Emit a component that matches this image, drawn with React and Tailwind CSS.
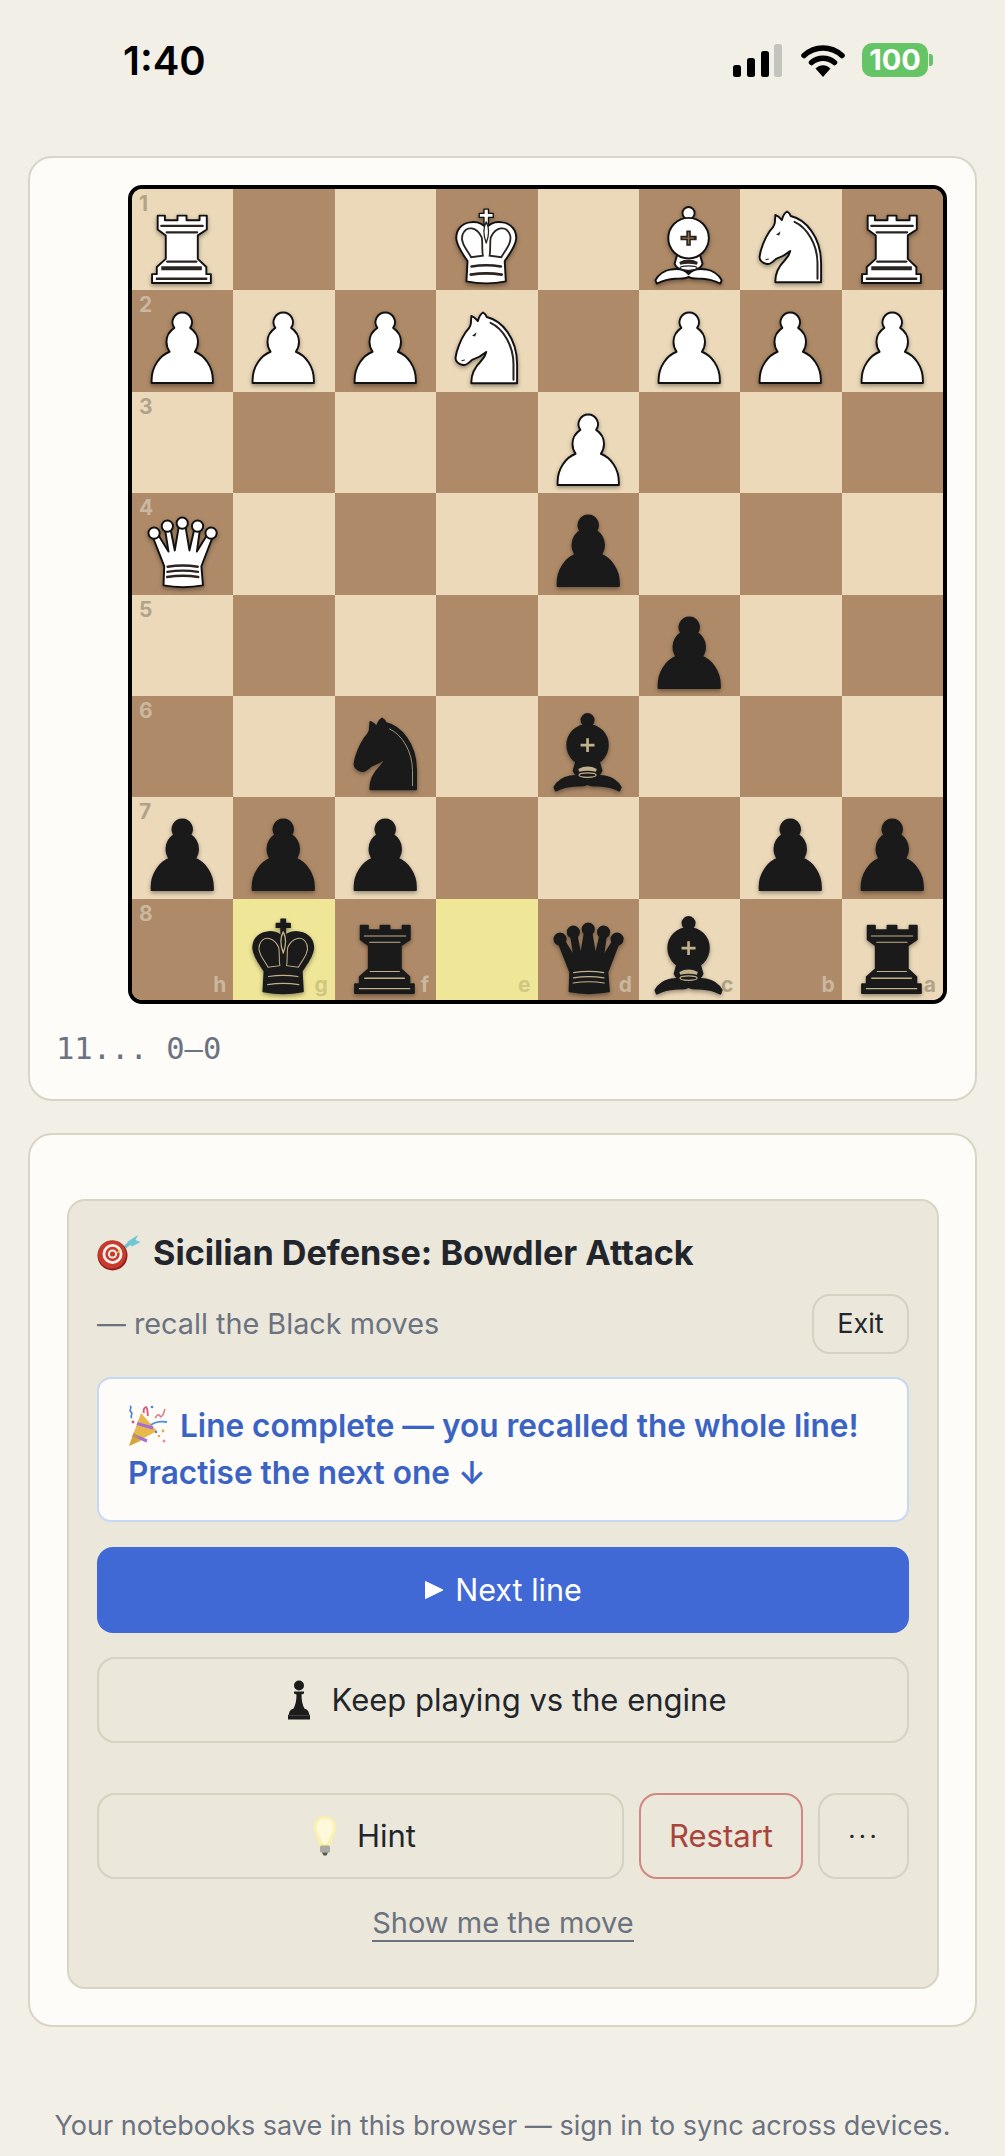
const PAWN = 'M22.3 10a4.3 4.3 0 0 0-3.5 6.8C16.7 18.2 15.3 20.5 15.3 23c0 1.6.5 3.2 1.4 4.4C12.4 29 8.7 34 8.7 40v1.3h27.2V40c0-6-3.7-11-8-12.6.9-1.2 1.4-2.8 1.4-4.4 0-2.5-1.4-4.8-3.5-6.2a4.3 4.3 0 0 0-3.5-6.8z';

function Piece({ type, black }) {
  const fill = black ? '#1a1a1a' : '#fff';
  const line = black ? '#1a1a1a' : '#111';
  const detail = black ? '#c2b08c' : '#2a2320';
  const base = { fill, stroke: line, strokeWidth: 0.85, strokeLinejoin: 'round' };
  const thin = black ? 0.45 : 1;
  const inner = { fill: 'none', stroke: detail, strokeWidth: thin, strokeLinecap: 'round' };

  let shape = null;
  if (type === 'p') {
    shape = <path d={PAWN} {...base} />;
  }
  if (type === 'r') {
    shape = (
      <>
        <path d="M11.4 11.8H14.6V13.9H20.2V11.8H24.2V13.9H30V11.8H33.2V18L29.2 20.6V31L33 34.6V37.8H35V41.7H8.9V37.8H11V34.6L15 31V20.6L11.4 18Z" {...base} />
        <path d="M13 16.4H31.4M15.4 19.2H28.9M15.6 32.2H28.6" {...inner} />
        <path d="M13 35.2H31" {...inner} strokeWidth={black ? 0.7 : 1.8} strokeLinecap="butt" />
        <path d="M10.6 39.8H33.4" {...inner} strokeWidth={black ? 0.6 : 1.1} strokeLinecap="butt" />
      </>
    );
  }
  if (type === 'k') {
    shape = (
      <>
        <path d="M21.3 8.9h2v1.9h2.1v1.8h-2.1v3h-2v-3h-2.1v-1.8h2.1z" {...base} strokeWidth={0.6} />
        <path d="M22.3 17.5C20.5 15 17.5 14.4 15 14.8 11 15.3 8.9 18.5 9 22 9.2 25.5 12 29 14 32L13.5 41Q22.3 42.8 31 41L30.5 32C32.5 29 35.4 25.5 35.6 22 35.7 18.5 33.5 15.3 29.6 14.8 27 14.4 24 15 22.3 17.5Z" {...base} />
        <path d="M22.3 14.6C21 17 20.8 20 22.3 24 23.8 20 23.6 17 22.3 14.6Z" {...base} stroke={detail} strokeWidth={0.6} />
        <path d="M20.3 21.5C18.3 17 13.5 15.8 11.8 20.2 10.6 23.5 13.6 26.8 15.6 30.3L20.8 29.6C20.3 27 20.8 24 20.3 21.5Z" {...inner} strokeWidth={black ? 0.45 : 0.8} />
        <path d="M24.3 21.5C26.3 17 31.1 15.8 32.8 20.2 34 23.5 31 26.8 29 30.3L23.8 29.6C24.3 27 23.8 24 24.3 21.5Z" {...inner} strokeWidth={black ? 0.45 : 0.8} />
        <path d="M15.8 34.4Q22.3 33.3 28.8 34.4M15.4 38Q22.3 36.9 29.2 38" {...inner} strokeWidth={black ? 0.55 : 1.2} />
      </>
    );
  }
  if (type === 'q') {
    shape = (
      <>
        <path d="M8.8 18.5 14.3 32.5 14 41Q22.5 42.6 31.5 41L30.8 32.5 36.2 18.5 34 17.5 28.8 26 30.3 15 28 14.5 25.5 25.5 23.5 13.5 21 13.5 19 25.5 16.8 14.5 14.5 15 16.2 26 11 17.5Z" {...base} />
        <circle cx="9.8" cy="17.8" r="2.5" {...base} />
        <circle cx="15.7" cy="14.7" r="2.5" {...base} />
        <circle cx="22.3" cy="13.4" r="2.5" {...base} />
        <circle cx="29.1" cy="14.7" r="2.5" {...base} />
        <circle cx="35.1" cy="17.8" r="2.5" {...base} />
        <path d="M15.8 32.7Q22.5 31.6 29.2 32.7M15.7 35Q22.5 33.9 29.3 35M15.6 37.3Q22.5 36.2 29.4 37.3" {...inner} strokeWidth={black ? 0.5 : 1.1} />
      </>
    );
  }
  if (type === 'b') {
    shape = (
      <>
        <path d="M17 29 15.8 33.2C16.5 35.5 19 36.3 22 36.5 25 36.3 27.5 35.5 28.2 33.2L27 29Z" {...base} />
        <path d="M22 37.8C20.5 35.8 17.5 35.2 14.2 35.7 11.5 36.2 8.8 37.8 7.3 40.5L7.9 42C10.5 40.7 13 39.9 16 39.8 18.5 39.7 20.5 40 22 39 23.5 40 25.5 39.7 28 39.8 31 39.9 33.5 40.7 36.1 42L36.7 40.5C35.2 37.8 32.5 36.2 29.8 35.7 26.5 35.2 23.5 35.8 22 37.8Z" {...base} />
        <circle cx="22" cy="10.7" r="2.7" {...base} />
        <circle cx="22" cy="21.8" r="9" {...base} />
        {!black && <path d="M22 18.4v6.8M18.4 21.8h7.2" fill="none" stroke="#2a2320" strokeWidth={2} />}
        {!black && <path d="M22 19.2v5.2M19.2 21.8h5.2" fill="none" stroke="#8a6f52" strokeWidth={0.6} />}
        {black && <path d="M22 18.7v6.2M18.9 21.8h6.2" fill="none" stroke={detail} strokeWidth={1.2} />}
        <path d="M17.9 32.4Q22 30.2 26.1 32.4L25.7 33.6Q22 32.8 18.3 33.6Z" fill={detail} stroke="none" />
        <ellipse cx="22" cy="35.1" rx="3.8" ry="1" {...inner} strokeWidth={0.5} />
      </>
    );
  }
  if (type === 'n') {
    shape = (
      <>
        <path d="M15.7 11.5C17 12 18 13 18.6 13.8 19 12 20 10.5 20.9 10 21.8 10.5 22.3 11.2 22.5 12 29 13.5 36 21 36 33V41.4H15.7C15.5 37 17.5 34 20 31.5 21 30.5 22 29 22.3 27.5 20 29.5 17.5 30.5 16 31 15 32 13.5 33.5 12 33.3 10 33 8.5 31.5 8.7 30 9 27 11 22 13 19 14 17.5 15.5 16.5 15.5 14.5Z" {...base} />
        <path d="M24.2 14.6C30 17.2 34.4 25 34.4 33V39.8" {...inner} strokeWidth={black ? 0.35 : 0.9} />
        {!black && <path d="M16 20.3 18 18.8 17.4 20.6Z" fill="#222" />}
        {!black && <path d="M11.5 31.4 12.6 31.1" {...inner} strokeWidth={0.5} />}
      </>
    );
  }

  return (
    <svg viewBox="0 0 45 45" className="absolute inset-0 h-full w-full drop-shadow-[0_2px_2px_rgba(0,0,0,0.38)]">
      {shape}
    </svg>
  );
}

// ranks run 1 to 8 from the top, files h to a: board is seen from Black's side
const BOARD = [
  ['R', '', '', 'K', '', 'B', 'N', 'R'],
  ['P', 'P', 'P', 'N', '', 'P', 'P', 'P'],
  ['', '', '', '', 'P', '', '', ''],
  ['Q', '', '', '', 'p', '', '', ''],
  ['', '', '', '', '', 'p', '', ''],
  ['', '', 'n', '', 'b', '', '', ''],
  ['p', 'p', 'p', '', '', '', 'p', 'p'],
  ['', 'k', 'r', '', 'q', 'b', '', 'r'],
];
const FILES = ['h', 'g', 'f', 'e', 'd', 'c', 'b', 'a'];

function Board() {
  return (
    <div className="mr-[2px] w-[819px] overflow-hidden rounded-[14px] border-4 border-black">
      <div className="grid grid-cols-8">
        {BOARD.map((row, r) =>
          row.map((cell, c) => {
            const light = (r + c) % 2 === 0;
            const lit = r === 7 && (c === 1 || c === 3);
            return (
              <div
                key={`${r}-${c}`}
                className={`relative h-[101.4px] ${lit ? 'bg-[#efe697]' : light ? 'bg-[#ecd9b9]' : 'bg-[#ae8a68]'}`}
              >
                {c === 0 && (
                  <span className={`absolute left-[7px] top-[2px] text-[21px] leading-[26px] font-bold ${light ? 'text-[#b0a38a]' : 'text-[#cbb7a0]'}`}>
                    {r + 1}
                  </span>
                )}
                {r === 7 && (
                  <span className={`absolute bottom-[2px] right-[7px] text-[21px] leading-[26px] font-bold ${lit ? 'text-[#cfc683]' : light ? 'text-[#b0a38a]' : 'text-[#cbb7a0]'}`}>
                    {FILES[c]}
                  </span>
                )}
                {cell && <Piece type={cell.toLowerCase()} black={cell === cell.toLowerCase()} />}
              </div>
            );
          })
        )}
      </div>
    </div>
  );
}

function StatusBar() {
  return (
    <div className="flex h-[156px] items-start justify-between pl-[123px] pr-[72px] pt-[37px]">
      <span className="text-[40px] leading-[48px] font-semibold text-black">1:40</span>
      <div className="mt-[6px] flex items-center">
        <svg width="50" height="33" viewBox="0 0 50 33">
          <rect x="0" y="21" width="8" height="12" rx="2.5" fill="#000" />
          <rect x="14" y="14" width="8" height="19" rx="2.5" fill="#000" />
          <rect x="28" y="7" width="8" height="26" rx="2.5" fill="#000" />
          <rect x="41" y="0" width="8" height="33" rx="2.5" fill="#c4c4be" />
        </svg>
        <svg width="44" height="33" viewBox="0 0 44 33" className="ml-[18px]">
          <path d="M3 11.5C14 1.5 30 1.5 41 11.5" fill="none" stroke="#000" strokeWidth="5.5" strokeLinecap="round" />
          <path d="M10.5 18.5C17 12.8 27 12.8 33.5 18.5" fill="none" stroke="#000" strokeWidth="5.5" strokeLinecap="round" />
          <path d="M14.5 24.5C19 20 25 20 29.5 24.5L22 33Z" fill="#000" />
        </svg>
        <div className="ml-[17px] flex h-[34px] w-[66px] items-center justify-center rounded-[10px] bg-[#65c466] text-[29px] font-bold text-white">
          100
        </div>
        <div className="ml-[1px] h-[12px] w-[4px] rounded-r-[3px] bg-[#65c466]" />
      </div>
    </div>
  );
}

function TargetEmoji() {
  return (
    <svg width="44" height="36" viewBox="0 0 44 36" className="shrink-0">
      <path d="M22 17 33 8" stroke="#6ec0cf" strokeWidth="3.4" />
      <path d="M30 7 41 0 38.5 5 43.5 7 35 11.5Z" fill="#6fc7d6" />
      <ellipse cx="15.5" cy="20.5" rx="15" ry="15" fill="#8f1f18" />
      <ellipse cx="15" cy="19.5" rx="14" ry="14" fill="#c93a2e" />
      <circle cx="15.5" cy="19" r="10" fill="#f6eeea" />
      <circle cx="15.5" cy="19" r="7.2" fill="#c93a2e" />
      <circle cx="15.5" cy="19" r="4.6" fill="#f6eeea" />
      <circle cx="15.5" cy="19" r="2.6" fill="#c93a2e" />
      <path d="M20 18 23 15" stroke="#e9c23f" strokeWidth="1.6" />
    </svg>
  );
}

function PopperEmoji() {
  return (
    <svg width="42" height="42" viewBox="0 0 42 42" className="shrink-0">
      <path d="M1 41 13 8 29 26Z" fill="#e6b94a" />
      <path d="M9 18.5 25 23" stroke="#a46fd6" strokeWidth="3" />
      <path d="M4.8 30 19 36" stroke="#a46fd6" strokeWidth="3" fill="none" />
      <path d="M1 41 6 27 13 36Z" fill="#cf9c34" opacity="0.7" />
      <path d="M2 1c3 2-2 4 1 6s-2 4 1 6" fill="none" stroke="#4f7fe0" strokeWidth="1.6" />
      <path d="M16 8c-1-3 0-5 2-6 2 1 1 4 2 9" fill="none" stroke="#d8567a" strokeWidth="1.8" />
      <path d="M27 13c2-2 2-4 4-3s1 3 3 1 2-5 3-7" fill="none" stroke="#e07b93" strokeWidth="1.6" />
      <path d="M23 20c5-4 10-4 16-3" fill="none" stroke="#4f8fe0" strokeWidth="1.8" />
      <circle cx="24" cy="2" r="1.3" fill="#4f7fe0" />
      <circle cx="5" cy="17" r="1.4" fill="#d8567a" />
      <circle cx="35" cy="26" r="1.4" fill="#e8a64e" />
      <circle cx="31" cy="31" r="1.3" fill="#e8a64e" />
      <circle cx="36" cy="36" r="1.5" fill="#e58fb0" />
      <circle cx="28" cy="27" r="1.2" fill="#4f7fe0" />
    </svg>
  );
}

function ChessEmoji() {
  return (
    <svg width="26" height="40" viewBox="0 0 26 40" className="shrink-0">
      <circle cx="13" cy="5.5" r="5" fill="#1c1c1c" />
      <path d="M8 11.5h10v2l-2.5 1c0 6 1 11 3.5 15h-12c2.5-4 3.5-9 3.5-15l-2.5-1z" fill="#1c1c1c" />
      <path d="M3 34c0-3 2.5-5 4-5h12c1.5 0 4 2 4 5l1 1.5v4H2v-4z" fill="#1c1c1c" />
      <path d="M3 35.5h20" stroke="#555" strokeWidth="0.7" />
    </svg>
  );
}

function BulbEmoji() {
  return (
    <svg width="24" height="40" viewBox="0 0 24 40" className="shrink-0">
      <path d="M12 0C5 0 .5 5 .5 11.5c0 6 4.5 10 6 18.5h11c1.5-8.5 6-12.5 6-18.5C23.5 5 19 0 12 0Z" fill="#fbf0ae" />
      <path d="M12 2.5c-5 0-8.5 4-8.500 9 0 5 4 9 6 16h5c2-7 6-11 6-16 0-5-3.500-9-8.500-9Z" fill="#fef9dc" />
      <rect x="7" y="29.5" width="10" height="7" rx="1.5" fill="#aaa9a0" />
      <path d="M9 36.5h6l-1.500 3h-3z" fill="#55544f" />
    </svg>
  );
}

const btn = 'flex h-[86px] items-center justify-center rounded-[18px] border-2 border-[#d6d1c0] text-[31px] text-[#22262c]';

export default function App() {
  return (
    <div className="h-[2156px] overflow-hidden bg-[#f2efe7] font-['Inter',sans-serif]">
      <StatusBar />

      <div className="mx-[28px] flex flex-col gap-[32px]">
        <div className="h-[945px] rounded-[24px] border-2 border-[#d9d4c3] bg-[#fdfcf8] px-[26px] pt-[27px]">
          <div className="flex justify-end">
            <Board />
          </div>
          <div className="mt-[27px] font-['DejaVu_Sans_Mono',monospace] text-[30.5px] leading-[36px] text-[#6b7280]">
            11... 0–0
          </div>
        </div>

        <div className="h-[894px] rounded-[24px] border-2 border-[#d9d4c3] bg-[#fdfcf8] pl-[37px] pr-[36px] pt-[64px]">
          <div className="h-[790px] rounded-[18px] border-2 border-[#d9d4c3] bg-[#ebe7da] px-[28px] pt-[30px]">
            <div className="flex items-center gap-[12px]">
              <TargetEmoji />
              <h2 className="text-[34.2px] leading-[44px] font-bold text-[#22262c]">Sicilian Defense: Bowdler Attack</h2>
            </div>

            <div className="mt-[19px] flex items-center justify-between">
              <span className="text-[28.8px] text-[#6b7280]">— recall the Black moves</span>
              <div className="flex h-[60px] w-[97px] items-center justify-center rounded-[18px] border-2 border-[#d6d1c0] text-[27px] text-[#22262c]">
                Exit
              </div>
            </div>

            <div className="mt-[23px] h-[145px] rounded-[14px] border-2 border-[#c5d8f5] bg-[#fdfcf8] px-[29px] pt-[23px] text-[31.6px] leading-[47px] font-semibold text-[#3b63c4]">
              <div className="flex items-center gap-[10px]">
                <PopperEmoji />
                <span>Line complete — you recalled the whole line!</span>
              </div>
              <div>Practise the next one ↓</div>
            </div>

            <div className="mt-[25px] flex h-[86px] items-center justify-center gap-[11px] rounded-[16px] bg-[#4169d6] text-[30.5px] text-white">
              <svg width="20" height="20" viewBox="0 0 20 20">
                <path d="M1.5 1.5 19 10 1.5 18.500Z" fill="#fff" stroke="#fff" strokeLinejoin="round" />
              </svg>
              Next line
            </div>

            <div className={`mt-[24px] gap-[20px] pl-[6px] ${btn}`}>
              <ChessEmoji />
              Keep playing vs the engine
            </div>

            <div className="mt-[50px] flex gap-[15px]">
              <div className={`flex-1 gap-[20px] pl-[8px] ${btn}`}>
                <BulbEmoji />
                Hint
              </div>
              <div className="flex h-[86px] w-[164px] items-center justify-center rounded-[18px] border-2 border-[#d08880] text-[31px] text-[#a8443a]">
                Restart
              </div>
              <div className={`w-[91px] font-light tracking-[2px] ${btn}`}>···</div>
            </div>

            <div className="mt-[25px] text-center">
              <span className="border-b-2 border-[#6b7280] text-[29px] leading-[38px] text-[#6b7280]">Show me the move</span>
            </div>
          </div>
        </div>
      </div>

      <p className="mt-[81px] text-center text-[27px] leading-[36px] text-[#6b7280]">
        Your notebooks save in this browser — sign in to sync across devices.
      </p>
    </div>
  );
}
